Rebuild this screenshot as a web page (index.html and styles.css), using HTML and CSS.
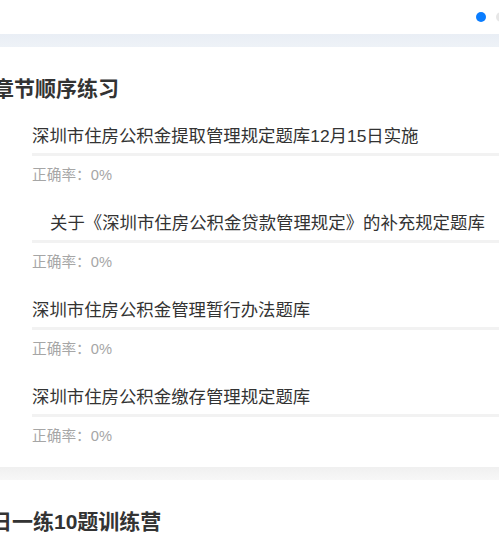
FILE: index.html
```html
<!DOCTYPE html>
<html lang="zh-CN">
<head>
<meta charset="utf-8">
<title>练习</title>
<link rel="stylesheet" href="styles.css">
</head>
<body>
<div class="page">
  <div class="banner">
    <div class="dots">
      <span class="dot dot-active"></span>
      <span class="dot"></span>
    </div>
  </div>
  <div class="band band-blue"></div>
  <section class="card">
    <h2 class="sec-title sec-title-first">章节顺序练习</h2>
    <ul class="list">
      <li class="item">
        <div class="name">深圳市住房公积金提取管理规定题库12月15日实施</div>
        <div class="rate">正确率：0%</div>
      </li>
      <li class="item">
        <div class="name name-indent">关于《深圳市住房公积金贷款管理规定》的补充规定题库</div>
        <div class="rate">正确率：0%</div>
      </li>
      <li class="item">
        <div class="name">深圳市住房公积金管理暂行办法题库</div>
        <div class="rate">正确率：0%</div>
      </li>
      <li class="item">
        <div class="name">深圳市住房公积金缴存管理规定题库</div>
        <div class="rate">正确率：0%</div>
      </li>
    </ul>
  </section>
  <div class="band band-grey"></div>
  <section class="card">
    <h2 class="sec-title sec-title-second">每日一练10题训练营</h2>
  </section>
</div>
</body>
</html>
```

FILE: styles.css
```css
html, body {
  margin: 0;
  padding: 0;
  background: #ffffff;
}
body {
  font-family: "Liberation Sans", "Noto Sans CJK SC", sans-serif;
  color: #333333;
  overflow: hidden;
}
.page {
  width: 499px;
  overflow: hidden;
}
.banner {
  height: 34px;
  display: flex;
  align-items: center;
  justify-content: flex-end;
}
.dots {
  display: flex;
  gap: 10px;
  margin-right: -7px;
}
.dot {
  width: 10px;
  height: 10px;
  border-radius: 50%;
  background: #e6e6e6;
}
.dot-active {
  background: #0a7dff;
}
.band {
  height: 13px;
}
.band-blue {
  background: linear-gradient(#e9eef5, #eef2f7);
}
.band-grey {
  background: linear-gradient(#f0f0f0, #f7f7f7);
}
.card {
  padding: 28px 0 21px 0;
}
.sec-title {
  margin: 0;
  font-size: 21px;
  line-height: 28px;
  font-weight: bold;
  color: #333333;
  white-space: nowrap;
}
.sec-title-first {
  margin-left: -7px;
  margin-bottom: 21px;
}
.sec-title-second {
  margin-left: -30px;
}
.list {
  list-style: none;
  margin: 0;
  padding: 0 0 0 32px;
}
.item {
  margin-bottom: 26px;
}
.item:last-child {
  margin-bottom: 0;
}
.name {
  font-size: 17.4px;
  line-height: 24px;
  color: #333333;
  white-space: nowrap;
  padding-bottom: 5px;
  border-bottom: 3px solid #f2f2f2;
}
.name-indent {
  text-indent: 18px;
}
.rate {
  margin-top: 9px;
  font-size: 14.7px;
  line-height: 20px;
  color: #a6a6a6;
}
```
